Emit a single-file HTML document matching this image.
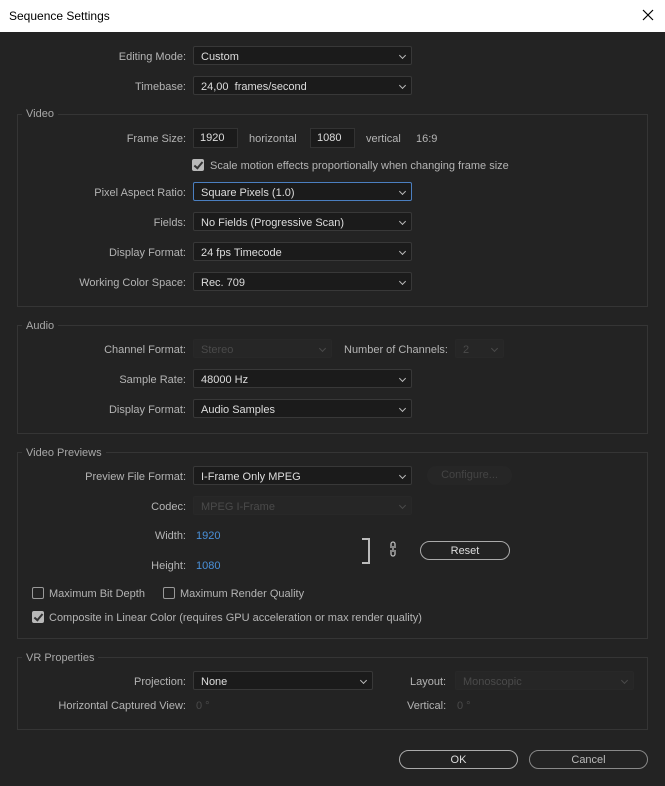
<!DOCTYPE html><html><head><style>
body{margin:0;width:665px;height:786px;background:#232323;font-family:"Liberation Sans",sans-serif;font-size:11px;color:#b4b4b4;position:relative;overflow:hidden}
.a{position:absolute;white-space:nowrap}
.tb{left:0;top:0;width:665px;height:32px;background:#fff;color:#000;font-size:12px}
.l{text-align:right;width:180px;left:6px;margin-top:1px}
.dd{position:absolute;height:19px;background:#1b1b1b;border:1px solid #383838;border-radius:2px;color:#ddd;line-height:20px;padding-left:7px;box-sizing:border-box}
.dd:after{content:"";position:absolute;right:6px;top:6px;width:4px;height:4px;border-right:1px solid #bbb;border-bottom:1px solid #bbb;transform:rotate(45deg)}
.dis{background:#262626;border-color:#282828;color:#4a4a4a}
.dis:after{border-color:#4a4a4a}
.g{position:absolute;left:17px;width:631px;border:1px solid #353535;box-sizing:border-box}
.gt{position:absolute;left:22px;background:#232323;padding:0 4px;color:#a8a8a8;margin-top:1px}
.in{position:absolute;height:20px;background:#1b1b1b;border:1px solid #333;color:#ddd;line-height:19px;padding-left:6px;box-sizing:border-box}
.cb{position:absolute;width:12px;height:12px;border:1px solid #999;border-radius:2px;box-sizing:border-box}
.ck{background:#b8b8b8;border-color:#b8b8b8}
.ck:after{content:"";position:absolute;left:3px;top:0px;width:3px;height:7px;border-right:2px solid #333;border-bottom:2px solid #333;transform:rotate(40deg)}
.btn{position:absolute;height:19px;border:1px solid #aaa;border-radius:10px;text-align:center;line-height:19px;color:#ddd;box-sizing:border-box}
.blue{color:#4a90d9}
.t1{margin-top:1px}
</style></head><body>
<div class="a tb"><span style="position:absolute;left:9px;top:9px">Sequence Settings</span>
<svg style="position:absolute;left:642px;top:9px" width="12" height="12"><path d="M1 1L11 11M11 1L1 11" stroke="#000" stroke-width="1.2"/></svg></div>

<div class="a l" style="top:50px">Editing Mode:</div><div class="dd" style="left:193px;top:46px;width:219px">Custom</div>
<div class="a l" style="top:80px">Timebase:</div><div class="dd" style="left:193px;top:76px;width:219px">24,00&nbsp; frames/second</div>

<div class="g" style="top:114px;height:193px"></div><div class="gt a" style="top:107px">Video</div>
<div class="a l" style="top:132px">Frame Size:</div>
<div class="in" style="left:193px;top:128px;width:45px">1920</div>
<div class="a t1" style="left:249px;top:132px">horizontal</div>
<div class="in" style="left:310px;top:128px;width:45px">1080</div>
<div class="a t1" style="left:366px;top:132px">vertical</div><div class="a t1" style="left:416px;top:132px">16:9</div>
<div class="cb ck" style="left:192px;top:159px"></div><div class="a t1" style="left:210px;top:159px">Scale motion effects proportionally when changing frame size</div>
<div class="a l" style="top:186px">Pixel Aspect Ratio:</div><div class="dd" style="left:193px;top:182px;width:219px;border-color:#4b7fc0">Square Pixels (1.0)</div>
<div class="a l" style="top:216px">Fields:</div><div class="dd" style="left:193px;top:212px;width:219px">No Fields (Progressive Scan)</div>
<div class="a l" style="top:246px">Display Format:</div><div class="dd" style="left:193px;top:242px;width:219px">24 fps Timecode</div>
<div class="a l" style="top:276px">Working Color Space:</div><div class="dd" style="left:193px;top:272px;width:219px">Rec. 709</div>

<div class="g" style="top:325px;height:109px"></div><div class="gt a" style="top:319px">Audio</div>
<div class="a l" style="top:343px">Channel Format:</div><div class="dd dis" style="left:193px;top:339px;width:139px">Stereo</div>
<div class="a t1" style="left:344px;top:343px">Number of Channels:</div><div class="dd dis" style="left:455px;top:339px;width:49px">2</div>
<div class="a l" style="top:373px">Sample Rate:</div><div class="dd" style="left:193px;top:369px;width:219px">48000 Hz</div>
<div class="a l" style="top:403px">Display Format:</div><div class="dd" style="left:193px;top:399px;width:219px">Audio Samples</div>

<div class="g" style="top:452px;height:187px"></div><div class="gt a" style="top:446px">Video Previews</div>
<div class="a l" style="top:470px">Preview File Format:</div><div class="dd" style="left:193px;top:466px;width:219px">I-Frame Only MPEG</div>
<div class="btn" style="left:427px;top:466px;width:85px;border:none;background:#262626;color:#444;border-radius:9px">Configure...</div>
<div class="a l" style="top:500px">Codec:</div><div class="dd dis" style="left:193px;top:496px;width:219px">MPEG I-Frame</div>
<div class="a l" style="top:529px">Width:</div><div class="a blue t1" style="left:196px;top:529px">1920</div>
<div class="a l" style="top:559px">Height:</div><div class="a blue t1" style="left:196px;top:559px">1080</div>
<div class="a" style="left:362px;top:538px;width:8px;height:26px;border:2px solid #bbb;border-left:none;box-sizing:border-box"></div>
<svg class="a" style="left:389px;top:541px" width="8" height="16"><path d="M2 7V3a2 2 0 0 1 4 0v4M2 9v4a2 2 0 0 0 4 0V9M4 5v6" stroke="#bbb" stroke-width="1.3" fill="none"/></svg>
<div class="btn" style="left:420px;top:541px;width:90px">Reset</div>
<div class="cb" style="left:32px;top:587px"></div><div class="a t1" style="left:49px;top:587px">Maximum Bit Depth</div>
<div class="cb" style="left:163px;top:587px"></div><div class="a t1" style="left:180px;top:587px">Maximum Render Quality</div>
<div class="cb ck" style="left:32px;top:611px"></div><div class="a t1" style="left:49px;top:611px">Composite in Linear Color (requires GPU acceleration or max render quality)</div>

<div class="g" style="top:657px;height:73px"></div><div class="gt a" style="top:651px">VR Properties</div>
<div class="a l" style="top:675px">Projection:</div><div class="dd" style="left:193px;top:671px;width:180px">None</div>
<div class="a t1" style="left:410px;top:675px">Layout:</div><div class="dd dis" style="left:455px;top:671px;width:179px">Monoscopic</div>
<div class="a l" style="top:699px">Horizontal Captured View:</div><div class="a t1" style="left:196px;top:699px;color:#4a4a4a">0 °</div>
<div class="a t1" style="left:407px;top:699px">Vertical:</div><div class="a t1" style="left:457px;top:699px;color:#4a4a4a">0 °</div>

<div class="btn" style="left:399px;top:750px;width:119px">OK</div>
<div class="btn" style="left:529px;top:750px;width:119px;border-color:#888;color:#bbb">Cancel</div>
</body></html>
